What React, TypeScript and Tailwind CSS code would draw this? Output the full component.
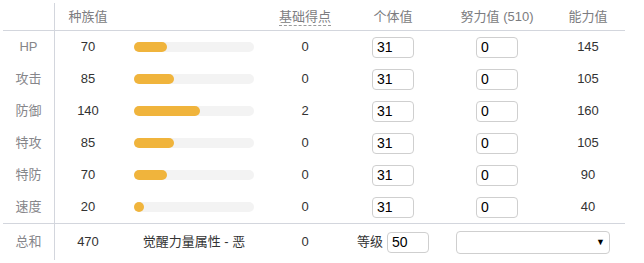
import React from "react";

type StatRow = {
  label: string;
  base: number;
  point: number;
  iv: number;
  ev: number;
  total: number;
};

const rows: StatRow[] = [
  { label: "HP", base: 70, point: 0, iv: 31, ev: 0, total: 145 },
  { label: "攻击", base: 85, point: 0, iv: 31, ev: 0, total: 105 },
  { label: "防御", base: 140, point: 2, iv: 31, ev: 0, total: 160 },
  { label: "特攻", base: 85, point: 0, iv: 31, ev: 0, total: 105 },
  { label: "特防", base: 70, point: 0, iv: 31, ev: 0, total: 90 },
  { label: "速度", base: 20, point: 0, iv: 31, ev: 0, total: 40 },
];

const font = {
  fontFamily: '"Liberation Sans", "Noto Sans CJK SC", sans-serif',
};

function StatBar({ value }: { value: number }) {
  // bar is 120px wide for a max of 255
  const w = Math.max(10, Math.round((value / 255) * 120));
  return (
    <div className="h-[10px] w-[120px] rounded-full bg-[#f3f3f3]">
      <div
        className="h-full rounded-full bg-[#f0b43c]"
        style={{ width: w }}
      />
    </div>
  );
}

function NumInput({ value }: { value: number }) {
  return (
    <input
      defaultValue={value}
      className="h-[21px] w-[42px] rounded-[4px] border border-[#cfcfcf] bg-white px-[4px] text-[14px] text-black outline-none"
      style={font}
    />
  );
}

export default function App() {
  const sum = rows.reduce((a, r) => a + r.base, 0);

  return (
    <div className="h-[263px] w-[644px] bg-white pl-[3px] pt-[3px]" style={font}>
      <div className="grid w-[622px] grid-cols-[52px_66px_146px_76px_100px_108px_74px] text-[13px]">
        {/* header */}
        <div className="h-[28px] border-b border-r border-[#d3d6dd]" />
        <div className="flex h-[28px] items-center justify-center border-b border-[#d3d6dd] pt-[1px] text-[#7c7c80]">
          种族值
        </div>
        <div className="h-[28px] border-b border-[#d3d6dd]" />
        <div className="flex h-[28px] items-center justify-center border-b border-[#d3d6dd] pt-[1px] text-[#7c7c80]">
          <span className="border-b border-dashed border-[#9a9a9a] leading-[16px]">
            基础得点
          </span>
        </div>
        <div className="flex h-[28px] items-center justify-center border-b border-[#d3d6dd] pt-[1px] text-[#7c7c80]">
          个体值
        </div>
        <div className="flex h-[28px] items-center justify-center border-b border-[#d3d6dd] pt-[1px] text-[#7c7c80]">
          努力值 (510)
        </div>
        <div className="flex h-[28px] items-center justify-center border-b border-[#d3d6dd] pt-[1px] text-[#7c7c80]">
          能力值
        </div>

        {rows.map((r, i) => {
          const last = i === rows.length - 1;
          const line = last ? "border-b border-[#d3d6dd]" : "";
          const h = last ? "h-[33px]" : "h-[32px]";
          return (
            <React.Fragment key={r.label}>
              <div
                className={`flex ${h} items-center justify-center border-r border-[#d3d6dd] text-[#86868a] ${line}`}
              >
                {r.label}
              </div>
              <div className={`flex ${h} items-center justify-center text-[#333] ${line}`}>
                {r.base}
              </div>
              <div className={`flex ${h} items-center pl-[13px] ${line}`}>
                <StatBar value={r.base} />
              </div>
              <div className={`flex ${h} items-center justify-center text-[#333] ${line}`}>
                {r.point}
              </div>
              <div className={`flex ${h} items-center justify-center ${line}`}>
                <NumInput value={r.iv} />
              </div>
              <div className={`flex ${h} items-center justify-center ${line}`}>
                <NumInput value={r.ev} />
              </div>
              <div className={`flex ${h} items-center justify-center text-[#333] ${line}`}>
                {r.total}
              </div>
            </React.Fragment>
          );
        })}

        {/* totals */}
        <div className="flex h-[36px] items-center justify-center border-r border-[#d3d6dd] text-[#86868a]">
          总和
        </div>
        <div className="flex h-[36px] items-center justify-center text-[#333]">{sum}</div>
        <div className="flex h-[36px] items-center justify-center text-[#333]">
          觉醒力量属性 - 恶
        </div>
        <div className="flex h-[36px] items-center justify-center text-[#333]">0</div>
        <div className="flex h-[36px] items-center justify-center gap-[4px] text-[#333]">
          <span>等级</span>
          <NumInput value={50} />
        </div>
        <div className="col-span-2 flex h-[36px] items-center pl-[13px]">
          <div className="flex h-[23px] w-[154px] items-center justify-end rounded-[4px] border border-[#cfcfcf] bg-white pr-[4px]">
            <span className="text-[9px] leading-none text-black">▼</span>
          </div>
        </div>
      </div>
    </div>
  );
}
